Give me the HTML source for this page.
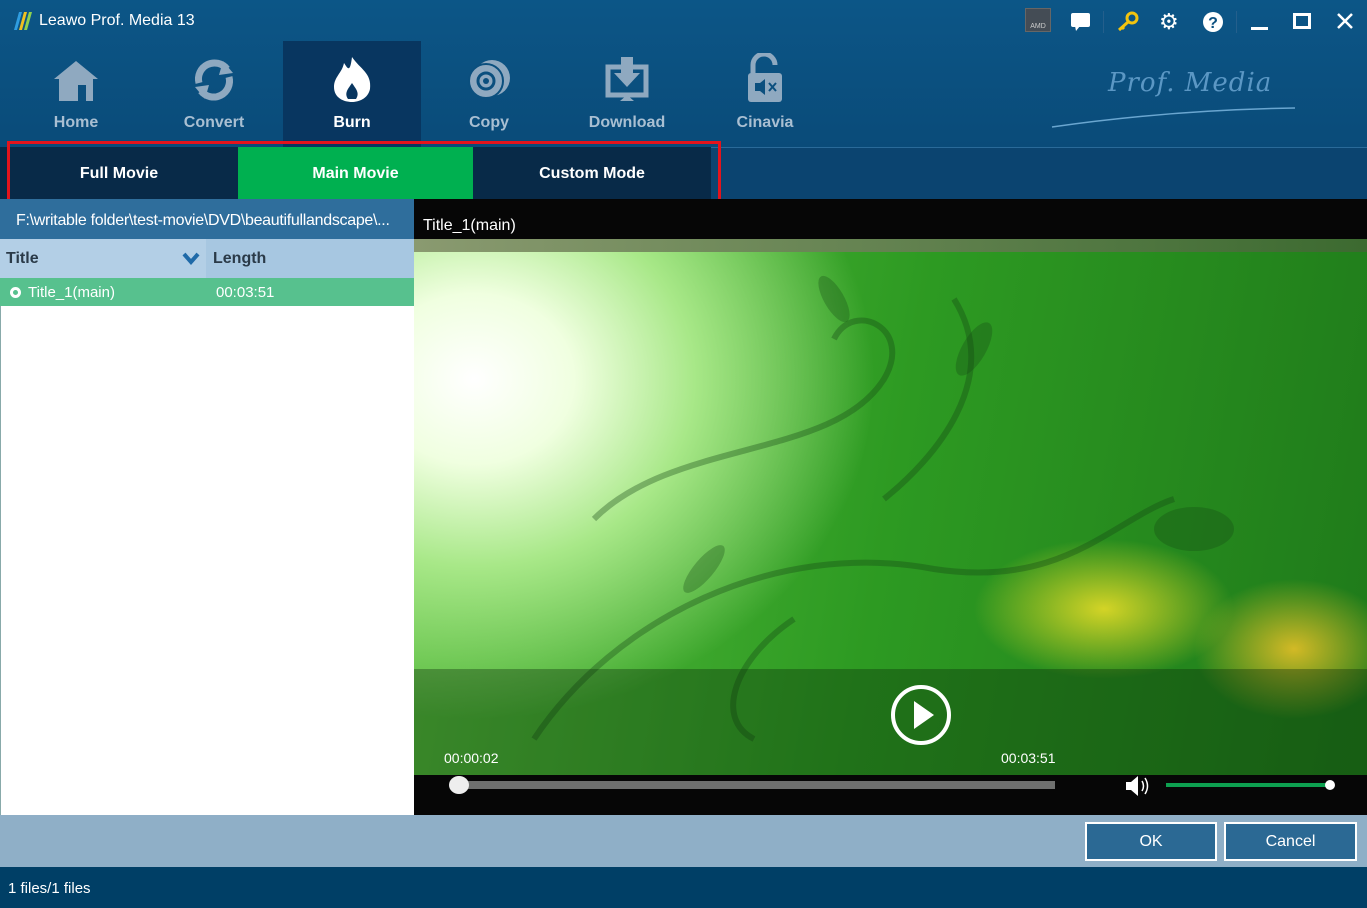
<!DOCTYPE html>
<html><head><meta charset="utf-8"><style>
*{margin:0;padding:0;box-sizing:border-box}
body{width:1367px;height:908px;overflow:hidden;font-family:"Liberation Sans",sans-serif;background:#0b4f7e;position:relative}
.abs{position:absolute}
.top{left:0;top:0;width:1367px;height:147px;background:linear-gradient(#0c5687,#0a4b79)}
.nav{top:41px;width:138px;height:106px;text-align:center;color:#a9bfd2;font-weight:bold;font-size:16px}
.nav .lbl{position:absolute;top:73px;left:0;right:0}
.mode{top:147px;left:0;width:1367px;height:52px;background:#0b4470}
.btn{top:147px;height:52px;color:#fff;font-weight:bold;font-size:16px;text-align:center;line-height:54px}
</style></head><body>
<div class="abs top"></div>
<div class="abs" style="left:12px;top:10px;width:22px;height:22px">
<svg width="22" height="22"><polygon points="2,20 7,2 10,2 5,20" fill="#2f9de0"/><polygon points="7,20 12,2 15,2 10,20" fill="#f0c020"/><polygon points="12,20 17,2 20,2 15,20" fill="#8fd14f"/></svg></div>
<div class="abs" style="left:39px;top:12px;color:#fff;font-size:16px">Leawo Prof. Media 13</div>
<div class="abs" style="left:1025px;top:8px;width:26px;height:24px;background:#444c55;border:1px solid #666;color:#ccc;font-size:7px;text-align:center;padding-top:14px">AMD</div>
<svg class="abs" style="left:1070px;top:12px" width="22" height="20"><rect x="1" y="1" width="19" height="14" rx="2" fill="#fff"/><polygon points="5,14 10,14 6,19" fill="#fff"/></svg>
<div class="abs" style="left:1103px;top:11px;width:1px;height:22px;background:#245f8c"></div>
<svg class="abs" style="left:1116px;top:10px" width="24" height="22"><circle cx="16" cy="8" r="5" fill="none" stroke="#f2c40f" stroke-width="3"/><path d="M12 12 L3 20 M6 17 L8 19" stroke="#f2c40f" stroke-width="3"/></svg>
<div class="abs" style="left:1159px;top:9px;color:#fff;font-size:22px">⚙</div>
<svg class="abs" style="left:1202px;top:11px" width="22" height="22"><circle cx="11" cy="11" r="10" fill="#fff"/><text x="11" y="17" font-size="16" font-weight="bold" text-anchor="middle" fill="#0b5080" font-family="Liberation Sans">?</text></svg>
<div class="abs" style="left:1236px;top:11px;width:1px;height:22px;background:#245f8c"></div>
<div class="abs" style="left:1251px;top:27px;width:17px;height:3px;background:#fff"></div>
<div class="abs" style="left:1293px;top:13px;width:18px;height:16px;border:3px solid #fff"></div>
<svg class="abs" style="left:1336px;top:12px" width="18" height="18"><path d="M2 2L16 16M16 2L2 16" stroke="#fff" stroke-width="2.5"/></svg>
<div class="abs" style="left:1108px;top:68px;color:#5b97c4;font-size:26px;font-style:italic;font-family:'DejaVu Serif',serif;letter-spacing:1px">Prof. Media</div>
<svg class="abs" style="left:1050px;top:105px" width="250" height="25"><path d="M2 22 Q120 5 245 3" stroke="#6aa6d0" stroke-width="1.5" fill="none"/></svg>
<div class="abs nav" style="left:7px"><svg style="margin-top:16px" width="50" height="46"><polygon points="25,4 47,22 42,22 42,44 8,44 8,22 3,22" fill="#8fa9c0"/><rect x="27" y="28" width="8" height="16" fill="#0b4f7e"/></svg><div class="lbl">Home</div></div>
<div class="abs nav" style="left:145px"><svg style="margin-top:16px" width="46" height="46"><path d="M8 26 A16 16 0 0 1 36 12" stroke="#8fa9c0" stroke-width="7" fill="none"/><polygon points="32,4 42,16 28,18" fill="#8fa9c0"/><path d="M38 20 A16 16 0 0 1 10 34" stroke="#8fa9c0" stroke-width="7" fill="none"/><polygon points="14,42 4,30 18,28" fill="#8fa9c0"/></svg><div class="lbl">Convert</div></div>
<div class="abs nav" style="left:283px;background:#083660;color:#fff"><svg style="margin-top:14px" width="44" height="48"><path d="M22 2 C30 14 42 18 40 34 C38 44 28 47 22 47 C14 47 4 43 4 32 C4 22 12 18 14 8 C18 14 20 18 22 2Z" fill="#fff"/><path d="M22 28 C26 34 30 38 26 44 L18 44 C14 38 18 34 22 28Z" fill="#083660"/></svg><div class="lbl">Burn</div></div>
<div class="abs nav" style="left:420px"><svg style="margin-top:16px" width="50" height="46"><circle cx="28" cy="21" r="18" fill="#8fa9c0"/><circle cx="22" cy="24" r="17" fill="#8fa9c0" stroke="#0b4f7e" stroke-width="2"/><circle cx="22" cy="24" r="8" fill="none" stroke="#0b4f7e" stroke-width="3"/><circle cx="22" cy="24" r="3" fill="#0b4f7e"/></svg><div class="lbl">Copy</div></div>
<div class="abs nav" style="left:558px"><svg style="margin-top:14px" width="46" height="48"><rect x="4" y="12" width="38" height="28" fill="none" stroke="#8fa9c0" stroke-width="5"/><rect x="17" y="2" width="12" height="16" fill="#8fa9c0"/><polygon points="10,18 36,18 23,32" fill="#8fa9c0"/><polygon points="16,46 30,46 23,40" fill="#8fa9c0"/></svg><div class="lbl">Download</div></div>
<div class="abs nav" style="left:696px"><svg style="margin-top:12px" width="40" height="50"><path d="M8 22 V12 A11 11 0 0 1 30 12" stroke="#8fa9c0" stroke-width="5" fill="none"/><rect x="3" y="20" width="34" height="29" rx="3" fill="#8fa9c0"/><polygon points="10,30 15,30 20,26 20,42 15,38 10,38" fill="#0b4f7e"/><path d="M24 30L31 38M31 30L24 38" stroke="#0b4f7e" stroke-width="2"/></svg><div class="lbl">Cinavia</div></div>
<div class="abs mode"></div>
<div class="abs" style="left:0;top:147px;width:1367px;height:1px;background:#2a6a99"></div>
<div class="abs btn" style="left:0;width:238px;background:#082a48">Full Movie</div>
<div class="abs btn" style="left:238px;width:235px;background:#00b050">Main Movie</div>
<div class="abs btn" style="left:473px;width:238px;background:#082a48">Custom Mode</div>
<div class="abs" style="left:7px;top:141px;width:714px;height:72px;border:3px solid #e3141c"></div>
<div class="abs" style="left:0;top:199px;width:414px;height:40px;background:#2f6e9c"></div>
<div class="abs" style="left:16px;top:212px;color:#fff;font-size:16px;white-space:nowrap;letter-spacing:-0.3px">F:\writable folder\test-movie\DVD\beautifullandscape\...</div>
<div class="abs" style="left:0;top:239px;width:414px;height:39px;background:#a7c7e1"></div>
<div class="abs" style="left:0;top:239px;width:206px;height:39px;background:#b3cfe6"></div>
<div class="abs" style="left:6px;top:250px;color:#2a3a48;font-size:16px;font-weight:bold">Title</div>
<svg class="abs" style="left:182px;top:252px" width="18" height="14"><path d="M2 2L9 10L16 2" stroke="#1f6aa8" stroke-width="4" fill="none"/></svg>
<div class="abs" style="left:213px;top:250px;color:#2a3a48;font-size:16px;font-weight:bold">Length</div>
<div class="abs" style="left:0;top:278px;width:414px;height:28px;background:#57c18e"></div>
<div class="abs" style="left:10px;top:287px;width:11px;height:11px;border:3px solid #fff;border-radius:50%"></div>
<div class="abs" style="left:28px;top:284px;color:#fff;font-size:15px">Title_1(main)</div>
<div class="abs" style="left:216px;top:284px;color:#fff;font-size:15px">00:03:51</div>
<div class="abs" style="left:0;top:306px;width:414px;height:509px;background:#fff;border-left:1px solid #8aa"></div>
<div class="abs" style="left:414px;top:199px;width:953px;height:40px;background:#060606"></div>
<div class="abs" style="left:423px;top:217px;color:#fff;font-size:16px">Title_1(main)</div>
<div class="abs" style="left:414px;top:239px;width:953px;height:536px;background:radial-gradient(ellipse 400px 340px at 60px 140px,#ffffff 0%,#f0ffe0 25%,#a8e888 55%,rgba(60,170,40,0) 100%),radial-gradient(ellipse 130px 70px at 690px 370px,rgba(255,230,40,.8),rgba(255,200,0,0) 100%),radial-gradient(ellipse 100px 70px at 880px 410px,rgba(255,200,40,.8),rgba(255,200,0,0) 100%),linear-gradient(100deg,#5bbf40,#2d9a22 50%,#1f7a1a)"></div>
<svg class="abs" style="left:414px;top:239px" width="953" height="536"><g fill="none" stroke="rgba(20,70,20,0.35)" stroke-width="6"><path d="M180 280 C260 200 420 220 470 140 C500 90 440 60 420 100"/><path d="M120 500 C200 380 360 300 520 330 C650 350 700 280 760 260"/><path d="M380 380 C320 420 300 480 340 500"/><path d="M540 60 C590 140 520 220 470 260"/></g><g fill="rgba(20,70,20,0.3)"><ellipse cx="560" cy="110" rx="12" ry="30" transform="rotate(30 560 110)"/><ellipse cx="420" cy="60" rx="10" ry="26" transform="rotate(-30 420 60)"/><ellipse cx="780" cy="290" rx="40" ry="22"/><ellipse cx="290" cy="330" rx="10" ry="30" transform="rotate(40 290 330)"/></g></svg>
<div class="abs" style="left:414px;top:239px;width:953px;height:13px;background:linear-gradient(90deg,#8a9a70,#3c6a30)"></div>
<div class="abs" style="left:414px;top:669px;width:953px;height:106px;background:rgba(10,40,10,0.35)"></div>
<svg class="abs" style="left:890px;top:684px" width="62" height="62"><circle cx="31" cy="31" r="28" fill="none" stroke="#fff" stroke-width="4"/><polygon points="24,17 24,45 44,31" fill="#fff"/></svg>
<div class="abs" style="left:444px;top:750px;color:#fff;font-size:14px">00:00:02</div>
<div class="abs" style="left:1001px;top:750px;color:#fff;font-size:14px">00:03:51</div>
<div class="abs" style="left:414px;top:775px;width:953px;height:40px;background:#060606"></div>
<div class="abs" style="left:455px;top:781px;width:600px;height:8px;background:#6f706f"></div>
<div class="abs" style="left:449px;top:776px;width:20px;height:18px;border-radius:50%;background:#eee"></div>
<svg class="abs" style="left:1125px;top:774px" width="30" height="24"><polygon points="1,8 6,8 13,2 13,22 6,16 1,16" fill="#fff"/><path d="M17 7 Q20 12 17 17 M20 4 Q25 12 20 20" stroke="#fff" stroke-width="1.5" fill="none"/></svg>
<div class="abs" style="left:1166px;top:783px;width:164px;height:4px;background:#0da050"></div>
<div class="abs" style="left:1325px;top:780px;width:10px;height:10px;border-radius:50%;background:#fff"></div>
<div class="abs" style="left:0;top:815px;width:1367px;height:52px;background:#8fafc7"></div>
<div class="abs" style="left:1085px;top:822px;width:132px;height:39px;background:#2b6994;border:2px solid #fff;color:#fff;font-size:16px;text-align:center;line-height:36px">OK</div>
<div class="abs" style="left:1224px;top:822px;width:133px;height:39px;background:#2b6994;border:2px solid #fff;color:#fff;font-size:16px;text-align:center;line-height:36px">Cancel</div>
<div class="abs" style="left:0;top:867px;width:1367px;height:41px;background:#003f66"></div>
<div class="abs" style="left:8px;top:880px;color:#fff;font-size:15px">1 files/1 files</div>
</body></html>
